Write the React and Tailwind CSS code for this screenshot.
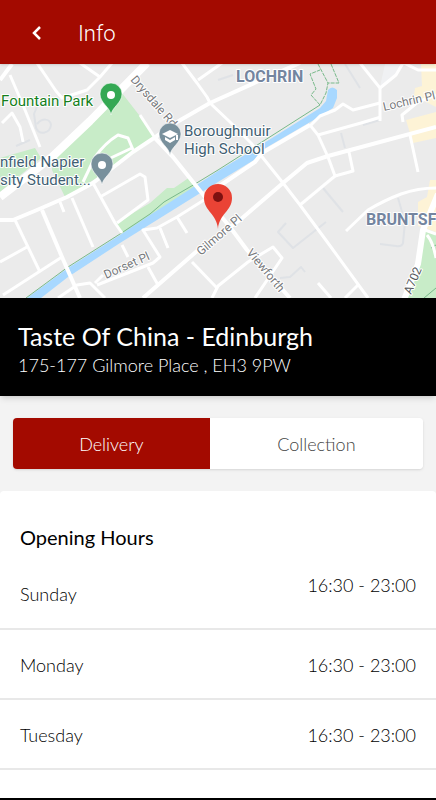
import React, { useState } from "react";

const hours = [
  { day: "Sunday", time: "16:30 - 23:00" },
  { day: "Monday", time: "16:30 - 23:00" },
  { day: "Tuesday", time: "16:30 - 23:00" },
];

const parks = [
  "M100 110 L118 88 L157 138 L110 170 L65 197 L52 170 L52 157 Z",
  "M0 158 L35 148 L41 158 L0 192 Z",
  "M116 223 L150 203 L167 188 L174 188 L190 177 L196 187 L123 234 Z",
  "M425 230 L436 235 V298 H407 L418 267 Z",
];

const shops = [
  "M421 64 H436 V107 L414 96 L415 88 L422 86 Z",
  "M406 120 L436 112 V138 L413 143 Z",
  "M430 180 H436 V232 L418 226 V202 L427 197 Z",
];

const paths = [
  "M345 64 L360 88",
  "M218 80 L233 75",
  "M363 125 L380 120",
  "M341 133 L345 148",
  "M286 223 L278 232 L293 248 L326 222",
  "M323 188 L343 212",
  "M280 278 L290 277 L301 267 L305 272",
  "M398 198 L405 222 L403 243 Q402 247 396 246 L380 244",
  "M38 104 L34 114 L36 128 C40 136 50 133 51 125 C50 118 42 118 37 124",
  "M16 146 L30 140 M22 143 L20 128",
];

const streets = [
  "M37 63 L56 91 L62 98 L87 90 L100 77 L112 63",
  "M80 63 L100 77",
  "M10 75 L25 110 L40 147",
  "M2 123 L12 113 L20 127 L23 142",
  "M182 63 L197 83 L207 97 L210 103 L230 122 L251 143 L283 183 L300 205 L328 243 L368 298",
  "M198 80 L222 63",
  "M140 115 L155 138",
  "M310 125 L318 135 L328 157 L335 176 L353 171 L349 152",
  "M335 176 L300 205",
  "M318 135 L361 123 L381 117",
  "M310 126 L320 116 L335 110 L343 104 L353 110 L380 103",
  "M360 63 L380 88 V121",
  "M380 88 L396 75 L403 63",
  "M398 60 L418 70 L436 70",
  "M403 122 L402 115 L418 102 L436 95",
  "M410 135 L418 172",
  "M346 231 L368 210 Q385 200 401 194 Q418 188 436 188",
  "M318 283 L331 298",
  "M345 298 L358 285",
  "M192 262 L217 288",
  "M212 298 L218 286 L248 262 L273 247 L282 258 L255 298",
  "M15 220 L40 272",
  "M72 198 L93 247",
  "M60 202 L64 212",
  "M93 183 L115 223 L122 233",
  "M0 262 L27 247",
  "M3 295 L62 257",
  "M58 298 L77 285 L90 283 L105 298",
  "M95 283 L103 275",
  "M97 285 L153 263 L160 257 L143 230 L157 228 L177 217 L204 200",
  "M160 228 L168 248",
  "M177 217 L187 233",
  "M122 245 L128 257",
  "M148 267 L158 285",
  "M100 197 L140 174 L145 177 L148 200 L117 223",
  "M83 182 L95 157 Q105 143 118 135 L128 138 L134 152",
  "M100 163 L132 148",
  "M427 235 Q433 242 436 258",
  "M425 230 L436 234",
];

const mainRoads = [
  "M0 80 L12 64",
  "M0 220 H13 L37 210 L67 197 L93 183 L133 152 L157 136 L177 122 L210 103 L261 80 L300 63",
  "M155 138 L173 157 L205 197 L230 227 L247 250 L290 298",
  "M143 298 L197 251 L240 220 L283 183 L307 163 L328 156 L436 127",
  "M42 210 L62 257 L80 298",
  "M218 187 L255 162 L262 153 L310 125",
];

function Pin({ x, y, color, children }) {
  return (
    <g transform={`translate(${x} ${y})`}>
      <path
        d="M0 0 C-1 -8 -11 -12 -11 -21 A11 11 0 0 1 11 -21 C11 -12 1 -8 0 0 Z"
        fill={color}
        stroke="#ffffff"
        strokeOpacity="0.6"
      />
      {children}
    </g>
  );
}

function Map() {
  return (
    <svg
      viewBox="0 64 436 234"
      preserveAspectRatio="xMidYMid slice"
      className="block h-[234px] w-full bg-[#ebebeb]"
      role="img"
      aria-label="Map of Gilmore Place"
    >
      <g fill="#c8ecc8">
        {parks.map((d) => (
          <path key={d} d={d} />
        ))}
      </g>
      <g fill="#fdf3d6">
        {shops.map((d) => (
          <path key={d} d={d} />
        ))}
      </g>
      <path d="M380 87 L396 75 L402 64 L385 64 Z" fill="#f0f1f3" />

      {/* Canal */}
      <path
        d="M27 298 L68 268 L120 235 L150 215 L195 186 L218 171 L253 150 L320 108 L326 101 L328 90 Q332 85 337 90 L337 98 L333 108 L312 121 L264 149 L254 160 L218 182 L120 243 L68 277 L41 298 Z"
        fill="#a8d8ff"
      />
      <g fill="none" stroke="#78b98a">
        <path d="M26 298 L68 267 L120 234 L150 214 L164 202 L195 184 L218 170 L320 105" />
        <path
          d="M331 64 L339 83 H328 L326 93 L320 105 L311 95 L316 89 L310 74 L320 70 M318 64 L328 83"
          strokeDasharray="4 1"
        />
        <path d="M436 245 L431 248 M436 288 L424 298" />
      </g>

      {/* Roads */}
      <g fill="none" strokeLinejoin="round">
        <g stroke="#dfe2e6" strokeWidth="2">
          {paths.map((d) => (
            <path key={d} d={d} />
          ))}
        </g>
        <g stroke="#ffffff" strokeWidth="3">
          {streets.map((d) => (
            <path key={d} d={d} />
          ))}
        </g>
        <g stroke="#ffffff" strokeWidth="4">
          {mainRoads.map((d) => (
            <path key={d} d={d} />
          ))}
        </g>
        <path d="M0 197 L52 157 L90 121 L147 63" stroke="#ffffff" strokeWidth="8" />
        <path d="M404 300 L418 264 L423 230 L438 194" stroke="#ffffff" strokeWidth="6" />
      </g>

      {/* Labels */}
      <g
        className="font-['Roboto',sans-serif]"
        fontWeight="400"
        stroke="#ffffff"
        strokeWidth="2"
        strokeLinejoin="round"
        paintOrder="stroke"
      >
        <g fontSize="12" fill="#77797c">
          <text transform="translate(130 80) rotate(49)">Drysdale Rd</text>
          <text transform="translate(384 111) rotate(-13)">Lochrin Pl</text>
          <text transform="translate(106 279) rotate(-24)">Dorset Pl</text>
          <text transform="translate(201 256) rotate(-41)">Gilmore Pl</text>
          <text transform="translate(246 253) rotate(50)">Viewforth</text>
          <text transform="translate(411 295) rotate(-67)" fill="#55585c">A702</text>
        </g>
        <g fontSize="15">
          <text x="1" y="106" fill="#157f1c">Fountain Park</text>
          <g fill="#3f6073">
            <text x="184" y="136">Boroughmuir</text>
            <text x="184" y="154">High School</text>
            <text x="0" y="167">nfield Napier</text>
            <text x="0" y="185">sity Student...</text>
          </g>
        </g>
        <g fontSize="16" fontWeight="700" fill="#74859f">
          <text x="236" y="82">LOCHRIN</text>
          <text x="366" y="225">BRUNTSF</text>
        </g>
      </g>

      {/* Pins */}
      <Pin x={111} y={115} color="#34a853">
        <circle cy="-20" r="4" fill="#ffffff" />
      </Pin>
      <Pin x={102} y={185} color="#78909c">
        <circle cy="-20" r="4" fill="#ffffff" />
      </Pin>
      <Pin x={170} y={155} color="#78909c">
        <path
          d="M-8 -21 L0 -25 L8 -21 L0 -17 Z M-5 -18 L0 -15 L5 -18 V-15 L0 -12 L-5 -15 Z M6 -20 H8 V-15 H6 Z"
          fill="#ffffff"
        />
      </Pin>
      <path
        d="M218 229 C217 214 204 211 204 198 A14 14 0 0 1 232 198 C232 211 219 214 218 229 Z"
        fill="#ea4335"
      />
      <circle cx="218" cy="197" r="5" fill="#7d1010" />
    </svg>
  );
}

export default function App() {
  const [orderType, setOrderType] = useState("delivery");

  const tabClass = (type) =>
    orderType === type ? "bg-[#a30a00] text-white" : "bg-white text-[#444444]";

  return (
    <div className="flex min-h-screen flex-col bg-[#f3f3f3] font-['Lato',sans-serif] font-light text-black">
      <header className="relative flex h-16 items-center bg-[#a30a00] pt-1 pl-6 text-white shadow">
        <button type="button" aria-label="Back" className="flex size-6 items-center justify-center">
          <svg viewBox="0 0 24 24" className="size-6" fill="none" stroke="currentColor" strokeWidth="2.5">
            <path d="M16 5 L10 11 L16 17" />
          </svg>
        </button>
        <h1 className="ml-[30px] font-['Roboto',sans-serif] text-[22px] leading-7 font-light">Info</h1>
      </header>

      <Map />

      <section className="bg-black px-[18px] pt-[22px] pb-[18px] text-white shadow-md">
        <h2 className="text-[25px] leading-8 font-normal">Taste Of China - Edinburgh</h2>
        <p className="text-[18px] leading-[26px]">175-177 Gilmore Place , EH3 9PW</p>
      </section>

      <div className="mx-[13px] my-[22px] flex h-[51px] overflow-hidden rounded text-[18px] shadow">
        <button
          type="button"
          onClick={() => setOrderType("delivery")}
          className={`w-[48%] pt-0.5 ${tabClass("delivery")}`}
        >
          Delivery
        </button>
        <button
          type="button"
          onClick={() => setOrderType("collection")}
          className={`flex-1 pt-0.5 ${tabClass("collection")}`}
        >
          Collection
        </button>
      </div>

      <section className="flex-1 rounded-t bg-white pt-8">
        <h3 className="px-5 text-[20px] leading-7 font-normal">Opening Hours</h3>
        <table className="mt-2 w-full text-[18px]">
          <tbody>
            {hours.map((row, index) => (
              <tr key={row.day} className="h-[70px] border-b-2 border-[#e8e8e8]">
                <th scope="row" className="pt-0.5 pl-5 text-left font-light">
                  {row.day}
                </th>
                <td className={`pt-0.5 pr-5 text-right ${index === 0 ? "pb-[18px]" : ""}`}>
                  {row.time}
                </td>
              </tr>
            ))}
          </tbody>
        </table>
      </section>
      <div className="h-0.5 bg-black" />
    </div>
  );
}
